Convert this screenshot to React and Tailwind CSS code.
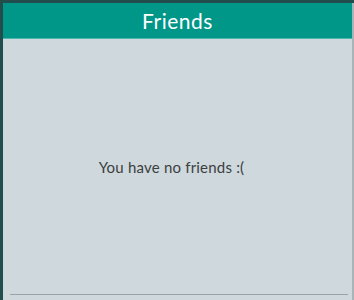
export default function App() {
  return (
    <div className="w-[354px] h-[300px] overflow-hidden bg-[#214e4c] pt-[3px] pl-[3px]" style={{ fontFamily: 'Lato, "Noto Sans", sans-serif' }}>
      <div className="flex h-full flex-col border-r-2 border-[#a9b4b8] bg-[#cfd8dc]">
        <header className="flex h-[36px] shrink-0 items-center justify-center border-b border-[#4db6ac] bg-[#009688]">
          <h1 className="text-[21px] leading-none text-white tracking-wide">Friends</h1>
        </header>
        <div className="flex flex-1 flex-col px-1">
          <div className="flex flex-1 items-center justify-center pt-[2px] pr-[12px]">
            <p className="text-[15px] tracking-[0.2px] text-[#3a3f42]">You have no friends :(</p>
          </div>
          <div className="mb-[5px] ml-[3px] h-px bg-[#9aa4a8]" />
        </div>
      </div>
    </div>
  )
}
